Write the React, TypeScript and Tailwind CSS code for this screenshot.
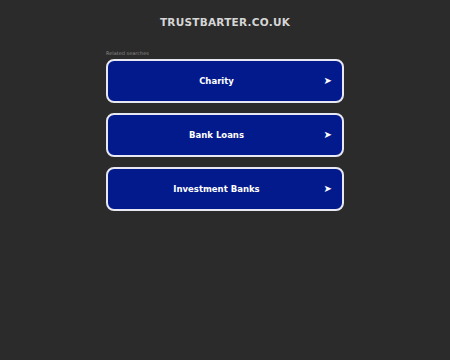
export default function App() {
  const items = ["Charity", "Bank Loans", "Investment Banks"];
  return (
    <div className="min-h-[360px] w-full bg-[#2b2b2b] flex flex-col items-center" style={{ fontFamily: '"DejaVu Sans", sans-serif' }}>
      <div className="pt-[16px] h-[44px] text-[10.5px] leading-[13px] font-bold tracking-[0.25px] text-[#d6d6d6]">TRUSTBARTER.CO.UK</div>
      <div className="w-[238px] flex flex-col">
        <div className="text-[5px] leading-[8px] text-[#8a8a8a] mb-[2px] mt-[5px]">Related searches</div>
        <div className="flex flex-col gap-[10px]">
          {items.map((t) => (
            <div key={t} className="relative h-[44px] rounded-[8px] border-2 border-[#e8e8f4] bg-[#021a8c] flex items-center justify-center pr-[17px]">
              <span className="text-[8.5px] font-bold text-white">{t}</span>
              <span className="absolute right-[10px] top-1/2 -translate-y-1/2 text-[10px] text-white leading-none">➤</span>
            </div>
          ))}
        </div>
      </div>
    </div>
  );
}
